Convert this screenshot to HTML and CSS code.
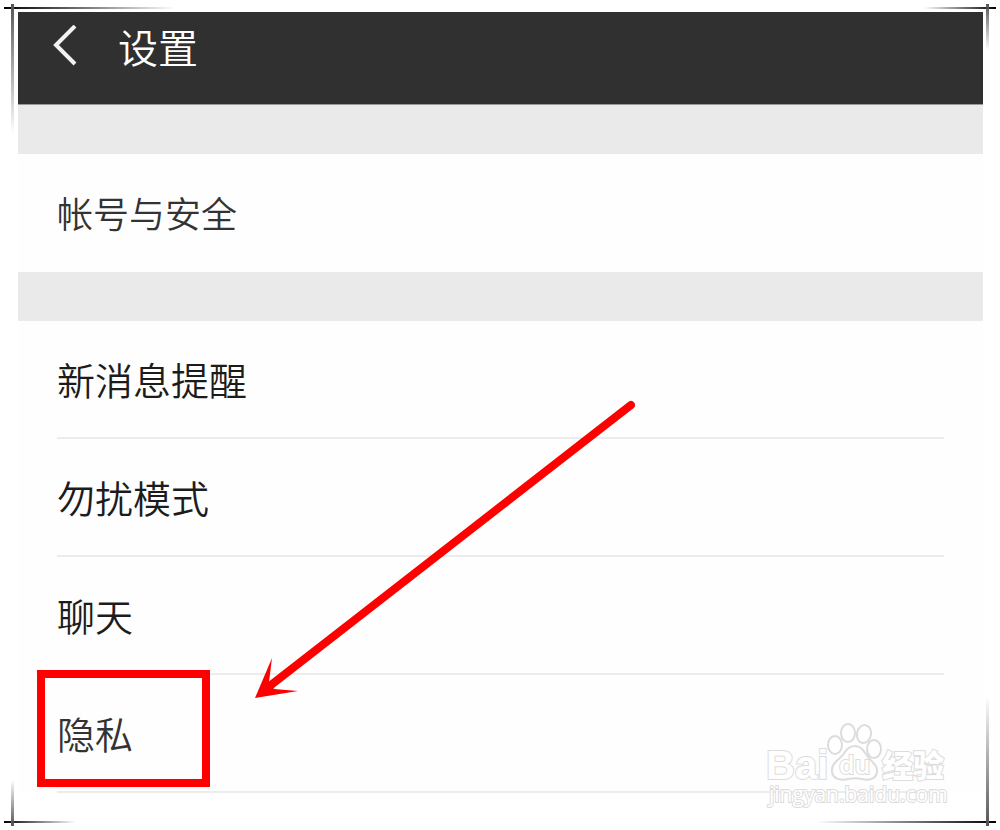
FILE: index.html
```html
<!DOCTYPE html>
<html lang="zh-CN">
<head>
    <meta charset="UTF-8">
    <meta name="viewport" content="width=device-width, initial-scale=1.0">
    <title>设置</title>
    <link rel="stylesheet" href="styles.css">
</head>
<body>
    <div class="frame">
        <main class="screen">
            <header class="topbar">
                <button class="back" type="button" aria-label="返回">
                    <svg width="24" height="42" viewBox="0 0 24 42">
                        <path d="M22 1L3 20L22 39" fill="none" stroke="#f2f2f2" stroke-width="4"/>
                    </svg>
                </button>
                <h1>设置</h1>
            </header>
            <nav class="group account">
                <a class="row" href="#account">帐号与安全</a>
            </nav>
            <nav class="group">
                <a class="row" href="#notify">新消息提醒</a>
                <a class="row" href="#quiet">勿扰模式</a>
                <a class="row" href="#chat">聊天</a>
                <a class="row marked" href="#privacy">隐私</a>
            </nav>

            <!-- arrow pointing at the privacy row -->
            <svg class="arrow" width="380" height="298" viewBox="0 0 380 298">
                <path d="M376 5L16 285" stroke="#f00" stroke-width="8" stroke-linecap="round"/>
                <path d="M0 298L17 258L14 282L19 289L43 291Z" fill="#f00"/>
            </svg>
        </main>

        <svg class="watermark" width="184" height="92" viewBox="0 0 184 92">
            <g fill="#fff" stroke="#dcdcdc" stroke-width="2">
                <text class="wm-bai" x="0" y="57">Bai</text>
                <ellipse cx="69" cy="23" rx="7" ry="9"/>
                <ellipse cx="82" cy="11" rx="7" ry="9"/>
                <ellipse cx="98" cy="12" rx="7" ry="9" transform="rotate(12 98 12)"/>
                <ellipse cx="108" cy="27" rx="7" ry="9"/>
                <path d="M89 24C81 24 79 31 75 35C69 40 65 44 66 50C67 57 75 59 82 57C87 56 91 56 96 57C103 59 110 57 111 50C112 44 107 41 102 35C98 30 96 24 89 24Z"/>
                <text class="wm-du" x="73" y="52">du</text>
                <text class="wm-cn" x="116" y="55">经验</text>
                <text class="wm-url" x="3" y="80">jingyan.baidu.com</text>
            </g>
        </svg>

        <span class="line-h top-left"></span>
        <span class="line-v top-left"></span>
        <span class="line-h top-right"></span>
        <span class="line-v top-right"></span>
        <span class="line-h bottom-left"></span>
        <span class="line-v bottom-left"></span>
        <span class="line-h bottom-right"></span>
        <span class="line-v bottom-right"></span>
    </div>
</body>
</html>
```
FILE: styles.css
```css
*,
*::after {
    box-sizing: border-box;
}
body {
    margin: 0;
    background-color: #fff;
    font-family: "Noto Sans CJK SC", sans-serif;
}
.frame {
    position: relative;
    min-height: 100vh;
    padding: 12px 17px 12px 18px;
}
.screen {
    position: relative;
    background-color: #fefefe;
}
.topbar {
    display: flex;
    align-items: center;
    gap: 41px;
    padding: 4px 35px 28px;
    border-bottom: 1px solid #999;
    background-color: #303030;
}
.back {
    display: flex;
    padding: 0;
    border: none;
    background: none;
    cursor: pointer;
}
h1 {
    margin: 0;
    color: #fff;
    font-size: 40px;
    font-weight: 350;
    line-height: 60px;
}
.group {
    padding: 0 39px;
    border-top: 49px solid #eaeaea;
}
.row {
    position: relative;
    display: block;
    border-bottom: 2px solid #ececec;
    color: #1c1c1c;
    font-size: 38px;
    font-weight: 350;
    line-height: 116px;
    text-decoration: none;
}
.account .row {
    border-bottom-color: transparent;
    color: #333;
    font-size: 36px;
}
.marked {
    color: #333;
}
/* red box round the privacy row */
.marked::after {
    content: "";
    position: absolute;
    top: -5px;
    left: -20px;
    width: 173px;
    height: 117px;
    border: 8px solid #f00;
}
.arrow {
    position: absolute;
    top: 388px;
    left: 237px;
}
.watermark {
    position: absolute;
    right: 50px;
    bottom: 16px;
    overflow: visible;
}
.watermark text {
    font-family: "Open Sans", sans-serif;
    paint-order: stroke;
}
.watermark .wm-bai {
    font-family: "Liberation Sans", Arial, sans-serif;
    font-size: 40px;
    font-weight: 700;
}
.wm-du {
    font-size: 25px;
    font-weight: 600;
}
.watermark .wm-cn {
    font-family: "Noto Sans CJK SC", sans-serif;
    font-size: 31px;
    font-weight: 900;
}
.wm-url {
    font-size: 21px;
}
/* crossing lines in the four corners */
.line-h,
.line-v {
    position: absolute;
}
.line-h {
    width: 72px;
    height: 2px;
    background: linear-gradient(to right, #000, transparent);
}
.line-v {
    width: 3px;
    height: 46px;
    background: linear-gradient(to bottom, #555, transparent);
}
.line-h.top-left {
    top: 7px;
    left: 4px;
    width: 172px;
}
.line-v.top-left {
    top: 4px;
    left: 11px;
    height: 130px;
}
.line-h.top-right {
    top: 7px;
    right: 4px;
    background: linear-gradient(to left, #000, transparent);
}
.line-v.top-right {
    top: 4px;
    right: 11px;
}
.line-h.bottom-left {
    bottom: 7px;
    left: 4px;
}
.line-v.bottom-left {
    bottom: 4px;
    left: 11px;
    background: linear-gradient(to top, #555, transparent);
}
.line-h.bottom-right {
    right: 4px;
    bottom: 7px;
    width: 180px;
    background: linear-gradient(to left, #000, transparent);
}
.line-v.bottom-right {
    right: 11px;
    bottom: 4px;
    height: 130px;
    background: linear-gradient(to top, #555, transparent);
}
```
